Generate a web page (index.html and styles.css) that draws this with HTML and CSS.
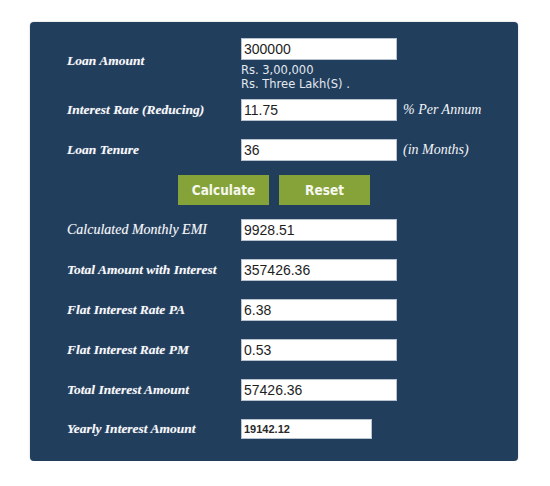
FILE: index.html
```html
<!DOCTYPE html>
<html lang="en">
<head>
<meta charset="utf-8">
<title>EMI Calculator</title>
<link rel="stylesheet" href="styles.css">
</head>
<body>
<form class="calc">
  <div class="row row-first">
    <label class="lbl lbl-top">Loan Amount</label>
    <div class="field">
      <input class="box" type="text" value="300000">
      <div class="words">Rs. 3,00,000<br>Rs. Three Lakh(S) .</div>
    </div>
  </div>

  <div class="row row-tight">
    <label class="lbl">Interest Rate (Reducing)</label>
    <input class="box" type="text" value="11.75">
    <span class="unit">% Per Annum</span>
  </div>

  <div class="row">
    <label class="lbl">Loan Tenure</label>
    <input class="box" type="text" value="36">
    <span class="unit">(in Months)</span>
  </div>

  <div class="actions">
    <button type="button" class="btn">Calculate</button>
    <button type="button" class="btn">Reset</button>
  </div>

  <div class="row row-after-actions">
    <label class="lbl lbl-plain">Calculated Monthly EMI</label>
    <input class="box" type="text" value="9928.51">
  </div>

  <div class="row">
    <label class="lbl">Total Amount with Interest</label>
    <input class="box" type="text" value="357426.36">
  </div>

  <div class="row">
    <label class="lbl">Flat Interest Rate PA</label>
    <input class="box" type="text" value="6.38">
  </div>

  <div class="row">
    <label class="lbl">Flat Interest Rate PM</label>
    <input class="box" type="text" value="0.53">
  </div>

  <div class="row">
    <label class="lbl">Total Interest Amount</label>
    <input class="box" type="text" value="57426.36">
  </div>

  <div class="row">
    <label class="lbl">Yearly Interest Amount</label>
    <input class="box box-small" type="text" value="19142.12">
  </div>
</form>
</body>
</html>
```

FILE: styles.css
```css
html, body {
  margin: 0;
  background: #ffffff;
}

body {
  padding: 22px 32px 0 30px;
}

/* calculator panel */
.calc {
  width: 488px;
  box-sizing: border-box;
  margin: 0;
  padding: 16px 0 22px 37px;
  background: #213e5d;
  border-radius: 4px;
  box-shadow: 0 0 2px rgba(0, 0, 0, 0.25);
  display: flex;
  flex-direction: column;
}

.row {
  display: grid;
  grid-template-columns: 174px 162px auto;
  align-items: center;
  margin-top: 18px;
}

.row-first {
  margin-top: 0;
}

.row-tight {
  margin-top: 8px;
}

.row-after-actions {
  margin-top: 14px;
}

/* field labels */
.lbl {
  font-family: "Liberation Serif", "Times New Roman", serif;
  font-style: italic;
  font-weight: bold;
  font-size: 13.5px;
  color: #f6f7f9;
  text-shadow: 0 0 1px rgba(255, 255, 255, 0.35);
  white-space: nowrap;
}

.lbl-top {
  align-self: start;
  margin-top: 15px;
}

.lbl-plain {
  font-weight: normal;
  font-size: 14px;
}

.unit {
  font-family: "Liberation Serif", "Times New Roman", serif;
  font-style: italic;
  font-size: 14px;
  color: #f2f4f7;
  white-space: nowrap;
}

/* text boxes */
.box {
  box-sizing: border-box;
  width: 156px;
  height: 22px;
  margin: 0;
  padding: 0 2px;
  border: 1px solid #b9c3cf;
  background: #ffffff;
  font-family: "Liberation Sans", Arial, sans-serif;
  font-size: 14px;
  color: #1e1e1e;
  outline: none;
}

.box-small {
  width: 131px;
  height: 20px;
  font-size: 11px;
  font-weight: bold;
  color: #2a2a2a;
}

.field {
  display: flex;
  flex-direction: column;
  grid-column: 2 / 4;
}

.words {
  margin-top: 3px;
  font-family: "DejaVu Sans", Verdana, sans-serif;
  font-size: 11.5px;
  line-height: 14px;
  color: #e4e9ef;
}

/* buttons */
.actions {
  display: flex;
  justify-content: center;
  gap: 10px;
  margin: 14px 0 0 -37px;
}

.btn {
  width: 91px;
  height: 30px;
  margin: 0;
  padding: 0;
  border: none;
  background: #86a33a;
  color: #f7f8ef;
  font-family: "DejaVu Sans Condensed", "DejaVu Sans", Verdana, sans-serif;
  font-weight: bold;
  font-size: 13.5px;
  cursor: pointer;
}
```
